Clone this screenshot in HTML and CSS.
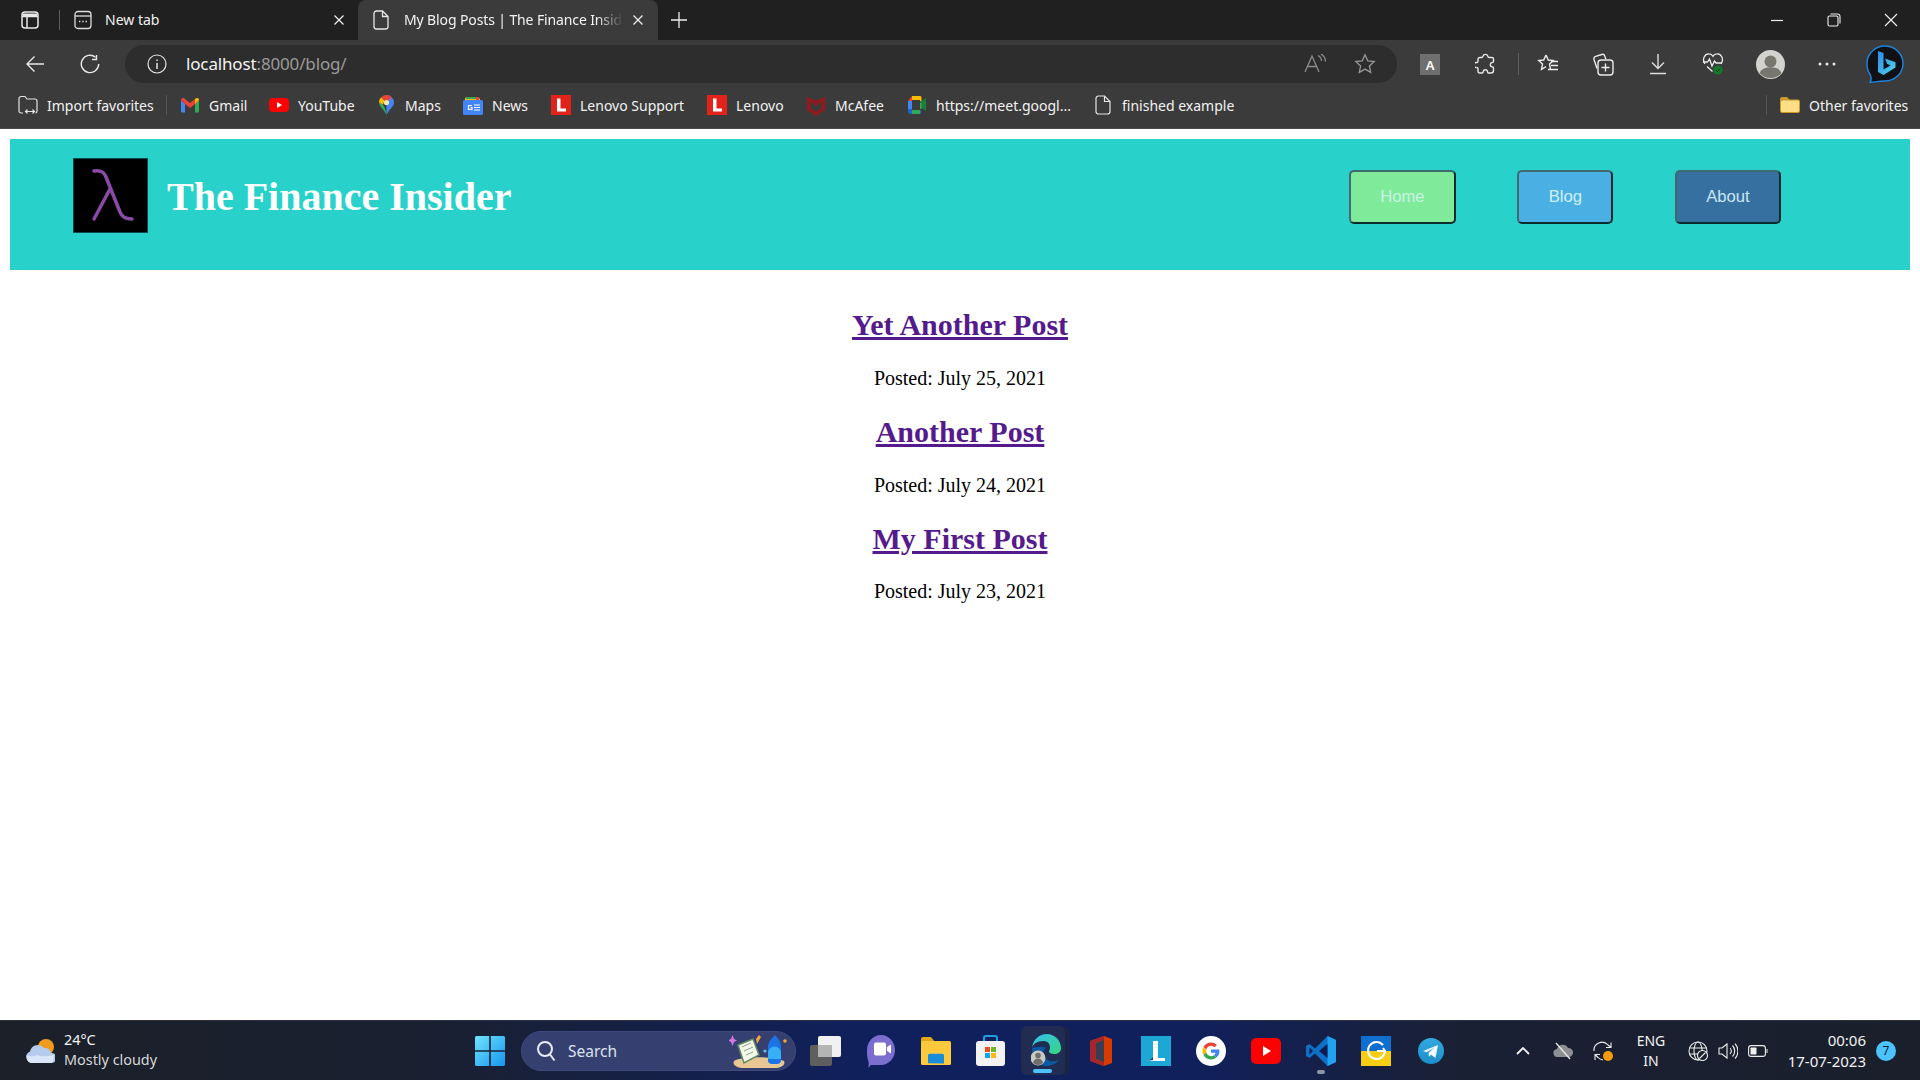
FILE: index.html
```html
<!DOCTYPE html>
<html lang="en">
<head>
<meta charset="utf-8">
<title>My Blog Posts | The Finance Insider</title>
<link rel="stylesheet" href="styles.css">
</head>
<body>
<div class="browser">
  <div class="tabstrip">
    <span class="strip-icon"><svg width="20" height="20" viewBox="0 0 20 20" fill="none" stroke="#e8e8e8" stroke-width="1.5"><rect x="2" y="2" width="16" height="16" rx="3"/><path d="M2 6.5h16M7 6.5V18"/><path d="M3 3.5h14V6H3z" fill="#e8e8e8" stroke="none"/></svg></span>
    <span class="strip-divider"></span>
    <div class="tab">
      <svg class="tab-icon" width="18" height="20" viewBox="0 0 18 20" fill="none" stroke="#ddd" stroke-width="1.3"><rect x="1" y="1.5" width="16" height="17" rx="3"/><path d="M1 6h16"/><path d="M5 11.5h1.4M8.3 11.5h1.4M11.6 11.5H13" stroke-width="1.6"/></svg>
      <span class="tab-title">New tab</span>
      <svg class="tab-close" width="12" height="12" viewBox="0 0 12 12" stroke="#eee" stroke-width="1.3"><path d="M1.5 1.5l9 9M10.5 1.5l-9 9"/></svg>
    </div>
    <div class="tab tab-active">
      <svg class="tab-icon" width="16" height="20" viewBox="0 0 16 20" fill="none" stroke="#e6e6e6" stroke-width="1.3"><path d="M3 1h6.5L15 6.5V16.500a2.500 2.500 0 0 1-2.500 2.500h-9A2.500 2.500 0 0 1 1 16.500v-13A2.500 2.500 0 0 1 3.500 1z"/><path d="M9.500 1v5.500H15"/></svg>
      <span class="tab-title tab-fade">My Blog Posts | The Finance Insid</span>
      <svg class="tab-close" width="12" height="12" viewBox="0 0 12 12" stroke="#eee" stroke-width="1.3"><path d="M1.500 1.500l9 9M10.500 1.500l-9 9"/></svg>
    </div>
    <svg class="tab-plus" width="18" height="18" viewBox="0 0 18 18" stroke="#eee" stroke-width="1.3"><path d="M9 1v16M1 9h16"/></svg>
    <div class="win-controls">
      <svg width="14" height="14" viewBox="0 0 14 14" stroke="#eee" stroke-width="1.2"><path d="M1 7.500h12"/></svg>
      <svg width="14" height="14" viewBox="0 0 14 14" fill="none" stroke="#eee" stroke-width="1.100"><rect x="1" y="3" width="10" height="10" rx="1.500"/><path d="M3.500 1h7A2.500 2.500 0 0 1 13 3.500v7"/></svg>
      <svg width="14" height="14" viewBox="0 0 14 14" stroke="#eee" stroke-width="1.200"><path d="M1 1l12 12M13 1L1 13"/></svg>
    </div>
  </div>
  <div class="toolbar">
    <span class="nav-btn"><svg width="20" height="18" viewBox="0 0 20 18" fill="none" stroke="#e8e8e8" stroke-width="1.400"><path d="M19 9H2M9.500 1.500L2 9l7.500 7.500"/></svg></span>
    <span class="nav-btn"><svg width="20" height="20" viewBox="0 0 20 20" fill="none" stroke="#e8e8e8" stroke-width="1.400"><path d="M15.500 3.200A8.700 8.700 0 1 0 18.700 10"/><path d="M16.500 1v4.500H12"/></svg></span>
    <div class="address">
      <svg class="addr-info" width="20" height="20" viewBox="0 0 20 20" fill="none" stroke="#e4e4e4" stroke-width="1.200"><circle cx="10" cy="10" r="9"/><path d="M10 9v6M10 5.500v1.500" stroke-width="1.500"/></svg>
      <span class="url"><span class="url-host">localhost</span>:8000/blog/</span>
      <svg class="addr-read" width="24" height="20" viewBox="0 0 24 20" fill="none" stroke="#8c8c8c" stroke-width="1.300"><path d="M1 18L8 2l7 16M3.500 12.500h9"/><path d="M14 1.500c2 1 3.500 3 3.500 5.500M17 0c2.500 1.500 4.500 4 4.500 7.500"/></svg>
      <svg class="addr-star" width="22" height="22" viewBox="0 0 22 22" fill="none" stroke="#969696" stroke-width="1.300"><path d="M11 1.800l2.800 6 6.400.7-4.800 4.400 1.300 6.500L11 16.100l-5.700 3.300 1.300-6.500-4.800-4.400 6.400-.7z"/></svg>
    </div>
    <div class="tools">
      <span class="tool"><svg width="20" height="21" viewBox="0 0 20 21"><rect width="20" height="21" fill="#6f6f6f"/><text x="10" y="15.500" class="a-glyph" text-anchor="middle">A</text></svg></span>
      <span class="tool"><svg width="20" height="22" viewBox="0 0 20 22" fill="none" stroke="#e8e8e8" stroke-width="1.400"><path d="M8 3.200a2.500 2.500 0 0 1 4.800 0c.1.700.6 1.300 1.400 1.300H17a1.500 1.500 0 0 1 1.500 1.500v2.500c0 .8-.8 1-1.500 1a2.200 2.200 0 0 0 0 4.300c.7 0 1.500.4 1.500 1.200v2.500A2.500 2.500 0 0 1 16 20h-2.500c-.8 0-1-.8-1-1.500a2.200 2.200 0 0 0-4.300 0c0 .7-.4 1.500-1.200 1.500H5a2 2 0 0 1-2-2v-2.500c0-.8-.8-1-1.500-1"/><path d="M1.500 14.500a2.500 2.500 0 0 1 0-5c.7 0 1.500-.3 1.500-1V6.500a2 2 0 0 1 2-2h1.500c.8 0 1.400-.5 1.500-1.300"/></svg></span>
      <span class="tool-divider"></span>
      <span class="tool tool-fav"><svg width="22" height="22" viewBox="0 0 22 22" fill="none" stroke="#ececec" stroke-width="1.400"><path d="M9 2l2.300 5 5 .6-3.800 3.500 1 5.200M9 2L6.700 7l-5 .6 3.800 3.500-1 5.200 4.500-2.600"/><path d="M14 9.500h7M14 13.500h7M11 17.500h10" transform="translate(0 -1)"/></svg></span>
      <span class="tool"><svg width="22" height="24" viewBox="0 0 22 24" fill="none" stroke="#ececec" stroke-width="1.400"><path d="M5 16.500L2 7.500A2.500 2.500 0 0 1 3.700 4.400l6-1.900a2.500 2.500 0 0 1 3.100 1.600l1 3"/><rect x="6" y="8" width="15" height="15" rx="3" /><path d="M13.500 11.500v8M9.500 15.500h8"/></svg></span>
      <span class="tool"><svg width="18" height="22" viewBox="0 0 18 22" fill="none" stroke="#dedede" stroke-width="1.400"><path d="M9 1v14M3 9.500L9 15.500l6-6M1 20.500h16"/></svg></span>
      <span class="tool"><svg width="22" height="24" viewBox="0 0 22 24" fill="none" stroke="#ececec" stroke-width="1.300"><path d="M3 12C-.5 7 3 1.500 7 1.800c2 .1 3.300 1.200 4 2.500.7-1.300 2-2.400 4-2.500 4-.3 7.500 5 4 10.200"/><path d="M1 10h4.500l2-3 2.500 7 2.500-5 1.500 2H20"/><path d="M5 14.500l5.500 5"/><circle cx="16" cy="18" r="4.600" fill="#127a2c" stroke="none"/><path d="M13.800 18l1.600 1.600 2.800-3" stroke="#0b3a17" stroke-width="1"/></svg></span>
      <span class="tool tool-profile"><svg width="29" height="29" viewBox="0 0 29 29"><circle cx="14.500" cy="14.500" r="14.500" fill="#d2d2ce"/><circle cx="14.500" cy="11.500" r="6" fill="#77776f"/><path d="M3.500 23a11.500 8 0 0 1 22 0 14.500 14.500 0 0 1-22 0z" fill="#77776f"/></svg></span>
      <span class="tool tool-more"><svg width="18" height="4" viewBox="0 0 18 4" fill="#e8e8e8"><circle cx="2" cy="2" r="1.500"/><circle cx="9" cy="2" r="1.500"/><circle cx="16" cy="2" r="1.500"/></svg></span>
      <span class="tool tool-bing"><svg width="40" height="38" viewBox="0 0 40 38"><defs><linearGradient id="bingB" x1="0" y1="0" x2="1" y2="1"><stop offset="0" stop-color="#2f8bf0"/><stop offset="1" stop-color="#4cd6e8"/></linearGradient></defs><path d="M20 1C30 1 38 9 38 18.500S30 36 20 36c-5 0-9 .8-15 1.500 1.500-2.500 1.500-5 .4-7.500C3 26.500 2 22.500 2 18.500 2 9 10 1 20 1z" fill="#0f1116" stroke="#1d84e0" stroke-width="1.400"/><path d="M13 6l5.500 1.900v16.500l7-4-3.400-1.600-2.100-5.300 10.500 3.700v5.400L18.500 30 13 27z" fill="url(#bingB)"/></svg></span>
    </div>
  </div>
  <div class="bookmarks">
    <a class="bm bm-import"><span class="bm-icon"><svg width="20" height="20" viewBox="0 0 20 20" fill="none" stroke="#e2e2e2" stroke-width="1.200"><path d="M5 18H3a2 2 0 0 1-2-2V3.500A2 2 0 0 1 3 1.500h4l2 2.500h8a2 2 0 0 1 2 2V16a2 2 0 0 1-1.500 2"/><path d="M8 16.500h8M9.500 14.500l-2 2 2 2M14.500 14.500l2 2-2 2"/></svg></span><span>Import favorites</span></a>
    <span class="bm-divider"></span>
    <a class="bm"><span class="bm-icon"><svg width="18" height="15" viewBox="0 0 18 15"><path d="M0 2v11a1.500 1.500 0 0 0 1.500 1.500H4V6z" fill="#4285f4"/><path d="M14 6v8.500h2.500A1.500 1.500 0 0 0 18 13V2z" fill="#34a853"/><path d="M0 2c0-1.800 2-2.500 3.300-1.500L9 5l5.700-4.500C16 -.5 18 .2 18 2l-4 4-5 4-5-4z" fill="#ea4335"/><path d="M14 1.300V6l4-4C18 .2 16-.5 14.700.5z" fill="#fbbc04"/></svg></span><span>Gmail</span></a>
    <a class="bm"><span class="bm-icon"><svg width="20" height="14" viewBox="0 0 20 14"><rect width="20" height="14" rx="4" fill="#f00"/><path d="M8 4l5 3-5 3z" fill="#fff"/></svg></span><span>YouTube</span></a>
    <a class="bm"><span class="bm-icon"><svg width="15" height="20" viewBox="0 0 15 20"><path d="M7.500 0A7.500 7.500 0 0 1 15 7.500c0 4.500-5 6.500-7.500 12.500z" fill="#4285f4"/><path d="M7.500 20C5 14 0 12 0 7.500L4 9.500c1.500 3 3.500 6.500 3.500 10.500z" fill="#34a853"/><path d="M0 7.500A7.500 7.500 0 0 1 2.200 2.200l3.400 3.400L4 9.500z" fill="#fbbc04"/><path d="M2.200 2.200A7.500 7.500 0 0 1 12.800 2.200L9.500 5.500l-4 .1z" fill="#ea4335"/><circle cx="7.500" cy="7.500" r="2.600" fill="#f7e7ae"/></svg></span><span>Maps</span></a>
    <a class="bm"><span class="bm-icon"><svg width="20" height="20" viewBox="0 0 20 20"><path d="M2 4a2 2 0 0 1 2-2h11l2 2v3H2z" fill="#fbbc04"/><path d="M3 2h10v2H3z" fill="#34a853"/><path d="M13 2h3v3h-3z" fill="#ea4335"/><rect y="5" width="20" height="15" rx="1.500" fill="#4285f4"/><path d="M9 10.500H5.500v4H9v-2H7.500" fill="none" stroke="#fff" stroke-width="1.200"/><path d="M11 10h6M11 12.500h6M11 15h6" stroke="#fff" stroke-width="1.200"/></svg></span><span>News</span></a>
    <a class="bm"><span class="bm-icon"><svg width="20" height="20" viewBox="0 0 20 20"><rect width="20" height="20" fill="#e2231a"/><path d="M6 3.500h3.500v10H15v3H6z" fill="#fff"/></svg></span><span>Lenovo Support</span></a>
    <a class="bm"><span class="bm-icon"><svg width="20" height="20" viewBox="0 0 20 20"><rect width="20" height="20" fill="#e2231a"/><path d="M6 3.500h3.500v10H15v3H6z" fill="#fff"/></svg></span><span>Lenovo</span></a>
    <a class="bm"><span class="bm-icon"><svg width="18" height="21" viewBox="0 0 18 21"><path d="M0 2l9 3.500L18 2v13l-9 6-9-6z" fill="#8f1a20"/><path d="M4 6.500l5 4.500 5-4.500v7L9 17l-5-3.500z" fill="#3b3b3b"/></svg></span><span>McAfee</span></a>
    <a class="bm"><span class="bm-icon"><svg width="18" height="18" viewBox="0 0 18 18"><path d="M4 0h8v4H4z" fill="#fbbc04"/><path d="M4 0L0 5h4z" fill="#ea4335"/><path d="M0 5h4v8H0z" fill="#4285f4"/><path d="M0 13h4v1H13v4H3a3 3 0 0 1-3-3z" fill="#1967d2"/><path d="M4 14h8v4H4z" fill="#34a853"/><path d="M12 0a1.500 1.500 0 0 1 1.500 1.500V6h-1.500z" fill="#fbbc04"/><path d="M12 5h2l4-3v13l-4-3h-2z" fill="#188038"/><path d="M12 7h1.500v6H12z" fill="#34a853"/></svg></span><span>https://meet.googl...</span></a>
    <a class="bm"><span class="bm-icon"><svg width="16" height="20" viewBox="0 0 16 20" fill="none" stroke="#e6e6e6" stroke-width="1.200"><path d="M3.500 1h6L15 6.500v10a2.500 2.500 0 0 1-2.500 2.500h-9A2.500 2.500 0 0 1 1 16.500v-13A2.500 2.500 0 0 1 3.500 1z"/><path d="M9.500 1v5.500H15"/></svg></span><span>finished example</span></a>
    <div class="bm-other">
      <span class="bm-divider"></span>
      <svg class="folder" width="20" height="18" viewBox="0 0 20 18"><path d="M0 3a2 2 0 0 1 2-2h5l2.500 2.500H18a2 2 0 0 1 2 2V15a2 2 0 0 1-2 2H2a2 2 0 0 1-2-2z" fill="#c99a2c"/><path d="M1 7a2 2 0 0 1 2-2.500h15A1.500 1.500 0 0 1 19 6v9a1 1 0 0 1-1 1H2a1 1 0 0 1-1-1z" fill="#fedf85"/></svg>
      <span>Other favorites</span>
    </div>
  </div>
</div>

<main class="page">
  <header class="site-header">
    <div class="brand">
      <svg class="logo" width="75" height="75" viewBox="0 0 75 75" fill="none"><rect x=".5" y=".5" width="74" height="74" fill="#000" stroke="#0d4b50"/><path class="logo-mark" d="M21 13c7-1 10 1 12 6l14 35c2 5 5 7 12 7M37 31L21 61" stroke="#8b4aa8" stroke-width="3.500" stroke-linecap="round"/></svg>
      <h1 class="site-title">The Finance Insider</h1>
    </div>
    <nav class="site-nav">
      <button class="nav-link nav-home" type="button">Home</button>
      <button class="nav-link nav-blog" type="button">Blog</button>
      <button class="nav-link nav-about" type="button">About</button>
    </nav>
  </header>
  <section class="posts">
    <h2 class="post-title"><a href="#">Yet Another Post</a></h2>
    <p class="post-date">Posted: July 25, 2021</p>
    <h2 class="post-title"><a href="#">Another Post</a></h2>
    <p class="post-date">Posted: July 24, 2021</p>
    <h2 class="post-title"><a href="#">My First Post</a></h2>
    <p class="post-date">Posted: July 23, 2021</p>
  </section>
</main>

<footer class="taskbar">
  <div class="weather">
    <svg width="30" height="26" viewBox="0 0 30 26"><circle cx="21" cy="9" r="8" fill="#f09a1e"/><path d="M7 25a6 6 0 0 1-2-11.500A8 8 0 0 1 19 10a6 6 0 0 1 7 5 5 5 0 0 1 1 10z" fill="#b4cbee"/><path d="M1.500 17c4 2 8 1.500 11 0 3 1.500 9 2 16 0v3c0 3-1 5-4 5H7c-3 0-5.500-2-5.500-8z" fill="#dbe6f8"/></svg>
    <div class="weather-text"><span class="w-temp">24°C</span><span class="w-desc">Mostly cloudy</span></div>
  </div>
  <svg class="start" width="30" height="30" viewBox="0 0 30 30"><defs><linearGradient id="win" x1="0" y1="0" x2="1" y2="1"><stop offset="0" stop-color="#6fe4fb"/><stop offset="1" stop-color="#1596f0"/></linearGradient></defs><path d="M0 1.500A1.500 1.500 0 0 1 1.500 0h12.700v14.200H0zM15.800 0h12.700A1.500 1.500 0 0 1 30 1.500v12.700H15.800zM0 15.800h14.200V30H1.500A1.500 1.500 0 0 1 0 28.500zM15.800 15.800H30v12.700a1.500 1.500 0 0 1-1.500 1.500H15.800z" fill="url(#win)"/></svg>
  <div class="search">
    <svg width="20" height="22" viewBox="0 0 20 22" fill="none" stroke="#e8ecf5" stroke-width="2"><circle cx="9" cy="9" r="7"/><path d="M14 14.500l4.500 6"/></svg>
    <span class="search-label">Search</span>
    <svg class="search-art" width="60" height="36" viewBox="0 0 60 36"><path d="M5 28c8-5 38-5 50 0 2 4-3 7-10 7H15C8 35 3 32 5 28z" fill="#e9c794"/><path d="M9 12l15-6 6 16-15 8z" fill="#f5f7e6" stroke="#5c8c66" stroke-width="1.500"/><path d="M13 14l9-4M15 18l9-4M17 22l7-3" stroke="#8aa3a0" stroke-width="1"/><path d="M27 6l3-4 2 2-4 7z" fill="#f4a63b"/><path d="M2 6l1.500-4L5 6l3 1.500L5 9 3.500 13 2 9-1 7.500z" fill="#d678e4"/><path d="M46 2c3 3 6 7 6 12v14a4 4 0 0 1-4 3h-5a4 4 0 0 1-4-3V14c0-5 4-9 7-12z" fill="#1a74e8"/><path d="M39 20a6.500 6.500 0 0 1 13 0v6H39z" fill="#36b0f7"/><circle cx="56" cy="8" r="1.800" fill="#f4a63b"/><circle cx="36" cy="18" r="1.600" fill="#5cc7f0"/></svg>
  </div>
  <div class="apps">
    <span class="app"><svg width="32" height="30" viewBox="0 0 32 30"><rect y="9" width="22" height="21" rx="2" fill="#5f5f5f"/><rect x="8" width="23" height="21" rx="2" fill="#f1f1f1"/><rect x="8" y="9" width="14" height="12" fill="#b4b4b4"/></svg></span>
    <span class="app"><svg width="30" height="34" viewBox="0 0 30 34"><path d="M15 1c8 0 14 7 14 15s-6 15-14 15H5l-3 3c1-3 1-5 0-8-1-3-1-6-1-10C1 8 7 1 15 1z" fill="#7b6ecf"/><path d="M8 10.500a2 2 0 0 1 2-2h8a2 2 0 0 1 2 2v9a2 2 0 0 1-2 2h-8a2 2 0 0 1-2-2zM21 13l4-2.500v9L21 17z" fill="#fff"/></svg></span>
    <span class="app"><svg width="30" height="28" viewBox="0 0 30 28"><path d="M0 2a2 2 0 0 1 2-2h8l4 5H0z" fill="#e2a812"/><rect y="4" width="30" height="24" rx="1.500" fill="#fdc93c"/><path d="M5 27.800V18h0a2 2 0 0 1 2-2h16a2 2 0 0 1 2 2v10z" fill="#1a8cdc" transform="translate(3 4) scale(.8)"/></svg></span>
    <span class="app"><svg width="29" height="31" viewBox="0 0 29 31"><path d="M8 7V3a2 2 0 0 1 2-2h9a2 2 0 0 1 2 2v4" fill="none" stroke="#1ea0e0" stroke-width="2"/><rect y="6" width="29" height="25" rx="3" fill="#f3f3f3"/><path d="M9 12h5v5H9z" fill="#e8501f"/><path d="M15 12h5v5h-5z" fill="#6fb52a"/><path d="M9 18h5v5H9z" fill="#12a3e8"/><path d="M15 18h5v5h-5z" fill="#fdb813"/></svg></span>
    <span class="app app-active"><svg width="30" height="32" viewBox="0 0 30 32"><defs><linearGradient id="edgeA" x1="0" y1="0" x2="1" y2="1"><stop offset="0" stop-color="#35c1f1"/><stop offset="1" stop-color="#35d67f"/></linearGradient></defs><path d="M1 14C2 5 9 0 15.500 0 24 0 30 6.500 30 14c0 4-3 6-7 6-3 0-5-1-5-2.500 0-1 1-1.500 1-4C19 9 16 7 12 7 6 7 2 10 1 14z" fill="url(#edgeA)"/><path d="M1 14c0 9 6 18 14 18 6 0 10-2.500 13-6-4 2-9 2-12-.5-4-3-5-8-1-12-5-1-12 0-14 .5z" fill="#0c59a4"/><circle cx="7" cy="24" r="7.500" fill="#c8c8c6"/><circle cx="7" cy="21.500" r="2.800" fill="#6e6e6a"/><path d="M2 29c1-6 9-6 10 0a7 7 0 0 1-10 0z" fill="#6e6e6a"/></svg><span class="app-ind app-ind-on"></span></span>
    <span class="app"><svg width="22" height="30" viewBox="0 0 22 30"><path d="M0 5l14-5 8 3v24l-8 3-14-5z" fill="#d83b01"/><path d="M0 5l14-5v4L6 7v16l8 3v4L0 25z" fill="#a4262c"/><path d="M6 7l8-3v22l-8-3z" fill="#3a3d52"/></svg></span>
    <span class="app"><svg width="30" height="30" viewBox="0 0 30 30"><rect width="30" height="30" fill="#1da7d4"/><path d="M12 5h5v17h7v3H6c3-1 6-2 6-5z" fill="#fff"/><path d="M12 14v6c0 2-3 4-6 5l6-1z" fill="#12407e"/></svg></span>
    <span class="app"><svg width="30" height="30" viewBox="0 0 30 30"><circle cx="15" cy="15" r="15" fill="#fff"/><path d="M15 6.500a8.500 8.500 0 0 1 6 2.400l-2.400 2.400A5 5 0 0 0 10.300 13.500L7.500 11A8.500 8.500 0 0 1 15 6.500z" fill="#ea4335"/><path d="M7.500 11l2.800 2.500a5 5 0 0 0 0 3L7.500 19a8.500 8.500 0 0 1 0-8z" fill="#fbbc04"/><path d="M7.500 19l2.800-2.500a5 5 0 0 0 7.700 2.700l2.500 2.300A8.500 8.500 0 0 1 7.500 19z" fill="#34a853"/><path d="M15 13.500h8.300a8.500 8.500 0 0 1-2.800 8l-2.500-2.300a4 4 0 0 0 1.600-2.400H15z" fill="#4285f4"/></svg></span>
    <span class="app"><svg width="30" height="26" viewBox="0 0 30 26"><rect width="30" height="26" rx="5" fill="#f00"/><path d="M12 8l8 5-8 5z" fill="#fff"/></svg></span>
    <span class="app"><svg width="30" height="30" viewBox="0 0 30 30"><path d="M21.500 0L30 4v22l-8.500 4L9 17.500 3.500 22 0 20V10l3.500-2L9 12.500z" fill="#0f6fc4"/><path d="M21.500 0L30 4v22l-8.500 4z" fill="#22a1f0"/><path d="M21.500 8L13 15l8.500 7z" fill="#0a1c52"/><path d="M3.500 11.500L7 15l-3.500 3.500z" fill="#0a1c52"/></svg><span class="app-ind"></span></span>
    <span class="app"><svg width="30" height="30" viewBox="0 0 30 30"><rect width="30" height="30" fill="#fff"/><path d="M0 0h30v15H0z" fill="#0f6fcf"/><path d="M0 15h30v15H0z" fill="#f7ce14"/><path d="M22 9a8.500 8.500 0 1 0 2 6h-8" fill="none" stroke="#fff" stroke-width="2"/><path d="M24 15l-2-3" stroke="#fff" stroke-width="2"/></svg></span>
    <span class="app"><svg width="26" height="26" viewBox="0 0 26 26"><defs><linearGradient id="tg" x1="0" y1="0" x2="0" y2="1"><stop offset="0" stop-color="#33a9e0"/><stop offset="1" stop-color="#1c8ecb"/></linearGradient></defs><circle cx="13" cy="13" r="13" fill="url(#tg)"/><path d="M5 13l15-6-2.500 13-4.500-3.200-2 2-.5-4 6-5-8 4.500z" fill="#f2f8fc"/></svg></span>
  </div>
  <div class="tray">
    <svg class="t-chevron" width="14" height="8" viewBox="0 0 14 8" fill="none" stroke="#f2f2f2" stroke-width="1.800"><path d="M1 7l6-6 6 6"/></svg>
    <svg class="t-cloud" width="20" height="18" viewBox="0 0 20 18"><path d="M5 15a4 4 0 0 1-1-8 6 6 0 0 1 11-1 4.500 4.500 0 0 1 1 9z" fill="#8d8f92"/><path d="M3 1l14 16" stroke="#e8e8e8" stroke-width="1.300"/></svg>
    <svg class="t-sync" width="20" height="20" viewBox="0 0 20 20" fill="none" stroke="#ececec" stroke-width="1.100"><path d="M1 10a8 8 0 0 1 14-6l3 2.500M18 1.500v5h-5"/><path d="M2 13.500l3 3a8 8 0 0 0 5 2.500M2 19v-5.500h5"/><circle cx="15" cy="15" r="5" fill="#f79a0d" stroke="none"/></svg>
    <div class="t-lang"><span>ENG</span><span>IN</span></div>
    <svg class="t-net" width="20" height="20" viewBox="0 0 20 20" fill="none" stroke="#ececec" stroke-width="1.100"><circle cx="10" cy="10" r="9"/><ellipse cx="10" cy="10" rx="4" ry="9"/><path d="M1 7h18M1 13h18"/><circle cx="14.500" cy="14.500" r="5" fill="#1a1f2b"/><path d="M11.500 17.500l6-6"/></svg>
    <svg class="t-vol" width="20" height="18" viewBox="0 0 20 18" fill="none" stroke="#ececec" stroke-width="1.100"><path d="M1 6v6h3l5 4V2L4 6z"/><path d="M12 6a4.500 4.500 0 0 1 0 6M14.500 3.500a8 8 0 0 1 0 11M17 1.500a11 11 0 0 1 0 15"/></svg>
    <svg class="t-bat" width="20" height="14" viewBox="0 0 20 14"><rect x=".6" y="1.600" width="16.800" height="10.800" rx="2.500" fill="none" stroke="#ececec" stroke-width="1.100"/><rect x="2.500" y="3.500" width="6" height="7" rx=".8" fill="#f0f0f0"/><path d="M18.500 5h1v4h-1z" fill="#ececec"/></svg>
    <div class="t-clock"><span>00:06</span><span>17-07-2023</span></div>
    <span class="t-badge">7</span>
  </div>
</footer>
</body>
</html>
```
FILE: styles.css
```css
* { box-sizing: border-box; }
html, body { margin: 0; height: 100%; }
body {
  display: flex;
  flex-direction: column;
  height: 100vh;
  overflow: hidden;
  background: #fff;
  font-family: "Liberation Serif", "Times New Roman", serif;
}
svg { display: block; flex: none; }

/* browser chrome */
.browser { font-family: "Noto Sans", "Open Sans", sans-serif; color: #f2f2f2; flex: none; }
.tabstrip { height: 40px; background: #202020; display: flex; align-items: center; padding-left: 20px; }
.strip-icon { width: 20px; }
.strip-divider { width: 1px; height: 20px; background: #5c5c5c; margin-left: 19px; }
.tab { display: flex; align-items: center; height: 40px; font-size: 14px; }
.tab:nth-child(3) { width: 298px; padding-left: 14px; }
.tab-active { width: 300px; padding-left: 15px; background: #3b3b3b; border-radius: 8px 8px 0 0; }
.tab-title { margin-left: 13px; margin-bottom: 2px; white-space: nowrap; flex: 1; }
.tab-active .tab-title { margin-left: 15px; }
.tab-fade { letter-spacing: -.12px; -webkit-mask-image: linear-gradient(to right, #000 88%, transparent 100%); mask-image: linear-gradient(to right, #000 88%, transparent 100%); }
.tab-close { margin: 0 13px 0 8px; }
.tab-active .tab-close { margin: 0 14px 0 9px; }
.tab-plus { margin-left: 12px; }
.win-controls { margin-left: auto; display: flex; gap: 43px; padding-right: 22px; }

.toolbar { height: 44px; background: #3b3b3b; display: flex; align-items: flex-end; padding-bottom: 1px; }
.nav-btn { width: 54px; height: 38px; display: flex; align-items: center; justify-content: center; margin-left: 8px; }
.nav-btn + .nav-btn { margin-left: 1px; }
.address { width: 1272px; height: 38px; margin-left: 8px; background: #2d2d2d; border-radius: 19px; display: flex; align-items: center; padding-left: 22px; padding-right: 21px; }
.url { margin: 0 0 2px 19px; font-size: 17px; color: #9a9a9a; letter-spacing: -.15px; }
.url-host { color: #f4f4f4; }
.addr-read { margin-left: auto; }
.addr-star { margin-left: 26px; }
.tools { display: flex; align-items: center; height: 38px; gap: 11px; margin-left: 11px; }
.tool { width: 44px; height: 38px; display: flex; align-items: center; justify-content: center; }
.tool-divider { width: 1px; height: 22px; background: #5e5e5e; }
.tool-fav { margin-left: -4px; }
.tool-profile { margin-left: 2px; }
.tool-more { margin-left: 2px; }
.tool-bing { margin-left: 3px; }
.a-glyph { font: 600 13px "Noto Sans", sans-serif; fill: #fff; }

.bookmarks {
  height: 45px;
  background: #3b3b3b;
  border-bottom: 1px solid #4c4c4c;
  display: grid;
  grid-template-columns: 147px 14px 89px 107px 87px 88px 156px 99px 101px 186px 673px 1fr;
  align-items: center;
  padding: 0 0 2px 19px;
  font-size: 14px;
  white-space: nowrap;
}
.bm { display: flex; align-items: center; }
.bm-import { margin-left: -1px; }
.bm-icon { width: 20px; margin-right: 9px; display: flex; justify-content: center; }
.bm-divider { display: block; width: 1px; height: 20px; background: #555; }
.bm-other { display: flex; align-items: center; }
.folder { margin: 0 9px 0 13px; }

/* page */
.page { flex: 1; padding: 10px; min-height: 0; }
.site-header {
  height: 131px;
  background: #28d1c9;
  display: flex;
  justify-content: space-between;
  align-items: flex-start;
  padding: 19px 129px 0 63px;
}
.brand { display: flex; align-items: flex-start; }
.logo-mark { filter: blur(.6px); }
.site-title { margin: 16px 0 0 19px; color: #fff; font-size: 40px; line-height: 46px; font-weight: 700; }
.site-nav { display: flex; gap: 61.500px; padding-top: 12px; }
.nav-link {
  height: 54px;
  padding: 0 29.300px;
  border: 2.500px solid;
  border-color: #3f6a70 #0b2a2e #0b2a2e #3f6a70;
  border-radius: 5px;
  font-family: "Liberation Sans", Arial, sans-serif;
  font-size: 16.670px;
}
.nav-home { background: #80ea9b; color: #c8f5e3; }
.nav-blog { background: #4ab0e4; color: #d2f0fa; }
.nav-about { background: #3670a0; color: #c8e6f4; }

.posts { text-align: center; padding-top: 38px; }
.post-title { margin: 0; font-size: 30px; line-height: 34px; font-weight: 700; }
.post-title a { color: #551a8b; }
.post-date { margin: 24.900px 0; font-size: 20px; line-height: 23px; color: #000; }

/* taskbar */
.taskbar {
  flex: none;
  height: 60px;
  border-top: 1px solid #2d3240;
  background: linear-gradient(to right, #1b2029 0%, #1a2030 22%, #10205c 45%, #10205c 62%, #1a2034 76%, #1a1f2b 100%);
  display: flex;
  align-items: center;
  color: #f2f2f2;
  font-family: "Noto Sans", "Open Sans", sans-serif;
}
.weather { width: 450px; margin-left: 25px; display: flex; align-items: center; gap: 9px; }
.weather-text { display: flex; flex-direction: column; font-size: 14.400px; line-height: 20px; margin-top: -2px; }
.w-desc { color: #d8d8d8; }
.search {
  width: 275px; height: 40px; margin-left: 16px;
  background: #354071;
  border: 1px solid #3e4a7d;
  border-radius: 20px;
  display: flex; align-items: center;
  padding-left: 14px;
  position: relative;
  overflow: hidden;
}
.search-label { margin-left: 12px; font-size: 15.500px; color: #dde2ee; }
.search-art { margin-left: auto; margin-right: 6px; }
.apps { display: flex; margin-left: 2px; }
.app { width: 55px; height: 50px; display: flex; align-items: center; justify-content: center; position: relative; }
.app-active { width: 44px; height: 49px; margin: 0 8.500px 0 2.500px; padding-left: 6px; background: #212c52; border-radius: 6px; box-shadow: 5px 0 0 #1a2448; }
.app-ind { position: absolute; left: 50%; bottom: 2px; width: 8px; height: 4px; margin-left: -4px; border-radius: 2px; background: #8a93a8; }
.app-ind-on { width: 19px; margin-left: -9.500px; background: #4cc2ff; }
.tray { display: flex; align-items: center; margin-left: 58px; }
.t-cloud { margin-left: 23px; }
.t-sync { margin-left: 20px; }
.t-lang { width: 28px; margin-left: 24px; display: flex; flex-direction: column; align-items: center; font-size: 14px; line-height: 20px; }
.t-net { margin-left: 23px; }
.t-vol, .t-bat { margin-left: 10px; }
.t-clock { width: 90px; margin-left: 8px; display: flex; flex-direction: column; align-items: flex-end; font-size: 15px; line-height: 21px; margin-right: 1px; }
.t-badge { width: 20px; height: 20px; margin-left: 9px; border-radius: 50%; background: #4cc2ff; color: #10202c; font-size: 12px; line-height: 20px; text-align: center; }
```
